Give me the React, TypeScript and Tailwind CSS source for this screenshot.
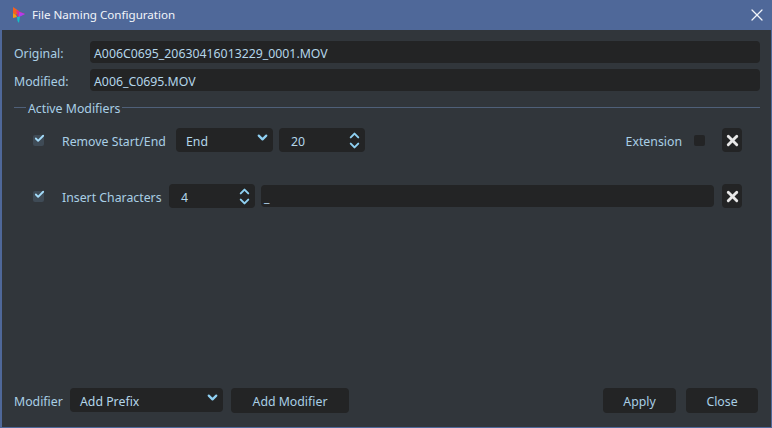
import { ChevronDown, ChevronUp, Check, X } from "lucide-react";

const text = "text-[#a9cfe6]";
const value = "text-[#b4d6ea] pt-[4px]";

function Field({ label, val }: { label: string; val: string }) {
  return (
    <div className="flex items-center h-[22px]">
      <span className={`w-[76px] shrink-0 pt-[4px] ${text}`}>{label}</span>
      <div className={`flex items-center flex-1 h-full rounded-[4px] bg-[#232425] pl-[4px] ${value}`}>{val}</div>
    </div>
  );
}

function Combo({ val, className }: { val: string; className: string }) {
  return (
    <div className={`flex items-center justify-between h-6 rounded-[4px] bg-[#232425] pl-[10px] pr-[3px] ${className}`}>
      <span className={value}>{val}</span>
      <ChevronDown size={15} strokeWidth={3.6} className="text-[#8fd0f2] -mt-[5px]" />
    </div>
  );
}

function Spin({ val }: { val: string }) {
  return (
    <div className="flex items-center justify-between w-[86px] h-6 rounded-[4px] bg-[#232425] pl-3 pr-[3px]">
      <span className={value}>{val}</span>
      <div className="flex flex-col text-[#8fd0f2] -space-y-[5px]">
        <ChevronUp size={15} strokeWidth={3.2} />
        <ChevronDown size={15} strokeWidth={3.2} />
      </div>
    </div>
  );
}

function CheckBox() {
  return (
    <div className="grid place-items-center w-[11px] h-[11px] rounded-[2px] bg-[#3f4b56]">
      <Check size={11} strokeWidth={4} className="text-[#a4dcfa] -mt-[3px] ml-[1px]" />
    </div>
  );
}

function RemoveBtn() {
  return (
    <div className="grid place-items-center w-5 h-6 rounded-[4px] bg-[#232425] text-[#e8e8e8]">
      <X size={17} strokeWidth={4} />
    </div>
  );
}

function Btn({ label, className }: { label: string; className: string }) {
  return (
    <div className={`flex items-center justify-center h-[25px] rounded-[4px] bg-[#232425] pt-[4px] ${text} ${className}`}>{label}</div>
  );
}

export default function App() {
  return (
    <div className="flex flex-col w-[772px] h-[428px] overflow-hidden bg-[#31363b] border-l-2 border-r border-b border-[#4f6899] text-[12.3px] font-['Noto_Sans',sans-serif]">
      <div className="flex items-center h-[30px] shrink-0 -ml-[2px] -mr-px bg-[#4f6899] pl-[13px] pr-[5px]">
        <svg width="12" height="16" viewBox="0 0 12 16" className="shrink-0">
          <path d="M0 0 L6 4 L3 8 L0 6 Z" fill="#f4601f" />
          <path d="M0 6 L3 8 L4 10 L0 11 Z" fill="#f59a12" />
          <path d="M3 3 L12 7 L5 10 Z" fill="#e02c8e" />
          <path d="M6 5 L12 7 L6 10 Z" fill="#b03cf0" />
          <path d="M4 10 L7 9.5 L6 16 L4.5 14 Z" fill="#12c0c8" />
        </svg>
        <span className="ml-[7px] text-[11.6px] text-[#f2f5fa]">File Naming Configuration</span>
        <X size={20} strokeWidth={1.5} className="ml-auto text-[#f2f5fa]" />
      </div>

      <div className="flex flex-col flex-1 pt-[11px] pl-[12px] pr-[11px] pb-[14px]">
        <div className="flex flex-col gap-[6px]">
          <Field label="Original:" val="A006C0695_20630416013229_0001.MOV" />
          <Field label="Modified:" val="A006_C0695.MOV" />
        </div>

        <div className="flex items-center h-4 mt-[8px]">
          <div className="w-[12px] h-px bg-[#4f6079]" />
          <span className={`mx-[2px] pt-[4px] ${text}`}>Active Modifiers</span>
          <div className="flex-1 h-px bg-[#4f6079]" />
        </div>

        <div className="flex items-center mt-[13px] h-6 pl-[19px] pr-[18px]">
          <CheckBox />
          <span className={`w-[114px] ml-[18px] pt-[4px] ${text}`}>Remove Start/End</span>
          <Combo val="End" className="w-[97px]" />
          <div className="ml-[6px]"><Spin val="20" /></div>
          <span className={`ml-auto pt-[4px] ${text}`}>Extension</span>
          <div className="w-[11px] h-[11px] rounded-[2px] bg-[#232425] ml-[12px]" />
          <div className="ml-[17px]"><RemoveBtn /></div>
        </div>

        <div className="flex items-center mt-8 h-6 pl-[19px] pr-[18px]">
          <CheckBox />
          <span className={`w-[107px] ml-[18px] pt-[4px] ${text}`}>Insert Characters</span>
          <Spin val="4" />
          <div className={`flex items-center flex-1 h-[22px] ml-[6px] rounded-[4px] bg-[#232425] pl-[3px] ${value}`}>_</div>
          <div className="ml-2"><RemoveBtn /></div>
        </div>

        <div className="flex items-start mt-auto h-[25px]">
          <span className={`w-[56px] h-[25px] flex items-center pt-[4px] ${text}`}>Modifier</span>
          <Combo val="Add Prefix" className="w-[153px]" />
          <Btn label="Add Modifier" className="w-[118px] ml-2" />
          <Btn label="Apply" className="w-[73px] ml-auto" />
          <Btn label="Close" className="w-[72px] ml-[10px] mr-[2px]" />
        </div>
      </div>
    </div>
  );
}
